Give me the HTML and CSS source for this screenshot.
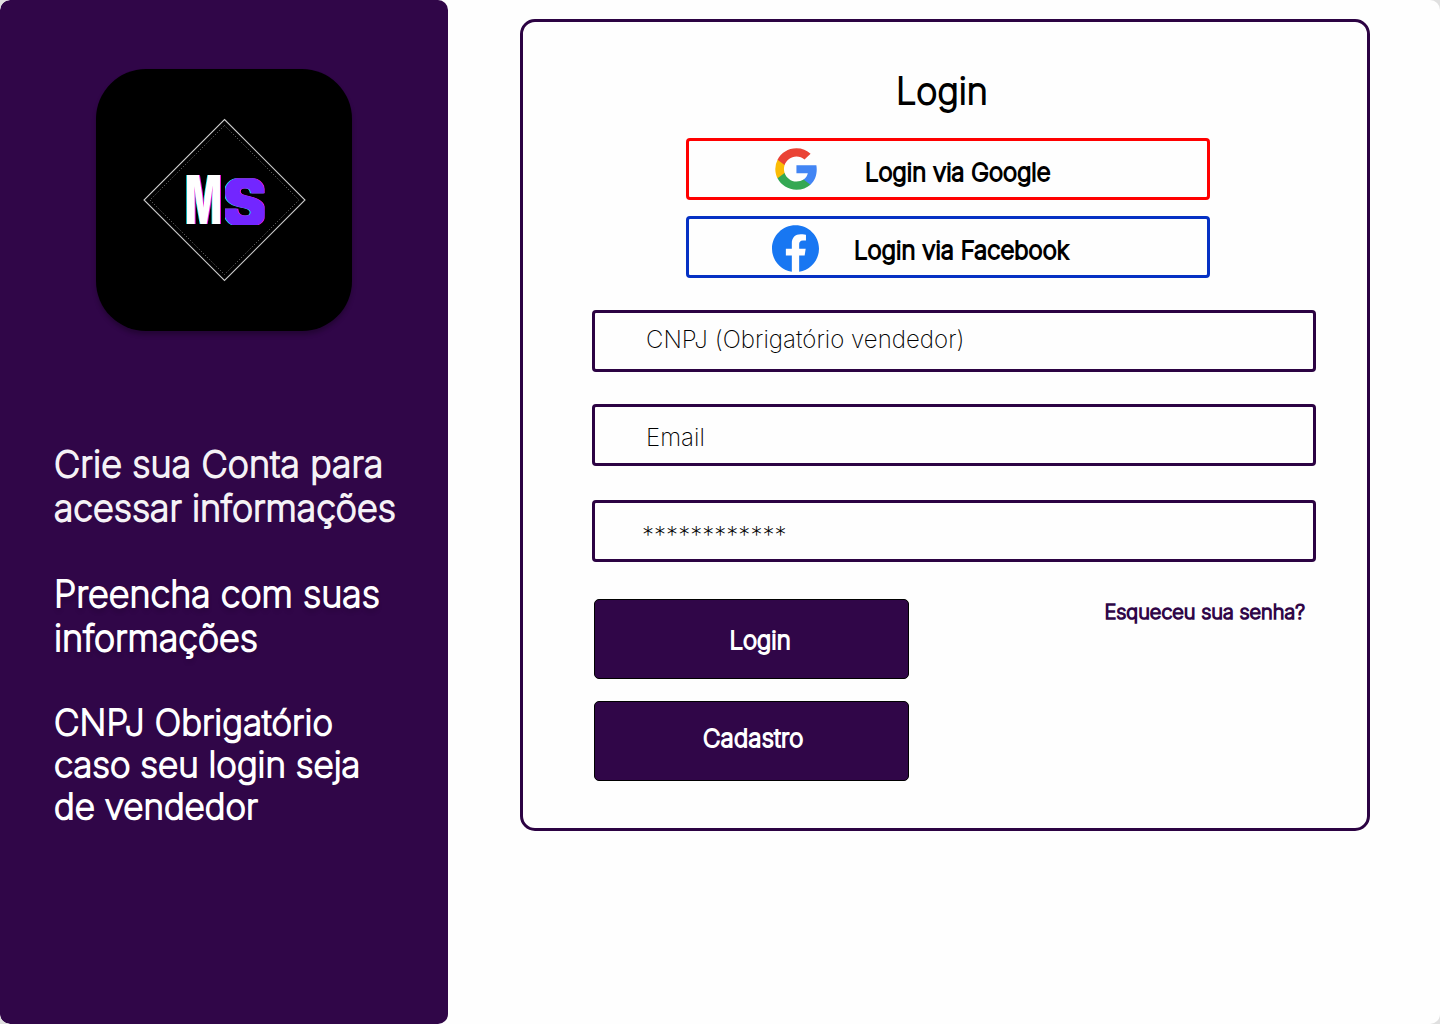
FILE: index.html
```html
<!DOCTYPE html>
<html lang="pt-BR">
<head>
<meta charset="utf-8">
<title>Login</title>
<link rel="stylesheet" href="styles.css">
</head>
<body>
<div class="page">
  <aside class="sidebar">
    <div class="logo">
      <svg class="logo-art" width="256" height="262" viewBox="0 0 256 262">
        <clipPath id="box"><rect x="129" y="109.500" width="39.500" height="46.500"/></clipPath>
        <path d="M128.500 50.500L209 131L128.500 211.500L48 131Z" fill="none" stroke="#c8c8c8" stroke-width="1.1"/>
        <path d="M128.500 56.500L203 131L128.500 205.500L54 131Z" fill="none" stroke="#777" stroke-width="1" stroke-dasharray="1 2"/>
        <g>
          <text class="m" transform="translate(88.400 155) scale(.57 1)" fill="#19e6f0">M</text>
          <text class="m" transform="translate(90.200 155) scale(.57 1)" fill="#f01bd8">M</text>
          <text class="m" transform="translate(89.300 155) scale(.57 1)" fill="#fff">M</text>
        </g>
        <g clip-path="url(#box)">
          <text class="s" transform="translate(125.500 157)" fill="#19e6f0" stroke="#19e6f0">S</text>
          <text class="s" transform="translate(127.500 157)" fill="#f01bd8" stroke="#f01bd8">S</text>
          <text class="s" transform="translate(126.500 157)" fill="#7226ff" stroke="#7226ff">S</text>
        </g>
      </svg>
    </div>
    <p class="note note-soft"><span class="loose">Crie sua Conta para</span><br>acessar informações</p>
    <p class="note note-shadow">Preencha com suas<br>informações</p>
    <p class="note note-small"><span class="loose">CNPJ Obrigatório</span><br>caso seu login seja<br>de vendedor</p>
  </aside>
  <main class="content">
    <form class="card">
      <h1 class="title">Login</h1>
      <div class="social google">
        <svg class="g-icon" width="42" height="42" viewBox="1.700 1.700 43.700 44.600" preserveAspectRatio="none">
          <path fill="#4285F4" d="M45.120 24.500c0-1.560-.14-3.060-.4-4.500H24v8.510h11.840c-.51 2.750-2.060 5.080-4.390 6.640v5.520h7.110c4.160-3.830 6.560-9.470 6.560-16.170z"/>
          <path fill="#34A853" d="M24 46c5.940 0 10.920-1.970 14.560-5.330l-7.110-5.520c-1.970 1.320-4.490 2.100-7.450 2.100-5.730 0-10.580-3.870-12.310-9.070H4.340v5.700C7.960 41.070 15.400 46 24 46z"/>
          <path fill="#FBBC05" d="M11.690 28.180C11.250 26.860 11 25.450 11 24s.25-2.860.69-4.180v-5.700H4.340A21.990 21.990 0 0 0 2 24c0 3.550.85 6.910 2.340 9.880l7.350-5.700z"/>
          <path fill="#EA4335" d="M24 10.750c3.230 0 6.130 1.110 8.410 3.290l6.310-6.310C34.910 4.180 29.930 2 24 2 15.400 2 7.960 6.930 4.340 14.120l7.350 5.700c1.730-5.200 6.580-9.070 12.310-9.070z"/>
        </svg>
        <span class="label">Login via Google</span>
      </div>
      <div class="social facebook">
        <svg class="f-icon" width="47" height="47" viewBox="0 0 24 24">
          <path fill="#1877F2" d="M24 12.073C24 5.446 18.627.073 12 .073S0 5.446 0 12.073c0 5.990 4.388 10.954 10.125 11.854v-8.385H7.078v-3.470h3.047V9.430c0-3.007 1.792-4.669 4.533-4.669 1.312 0 2.686.235 2.686.235v2.953H15.830c-1.491 0-1.956.925-1.956 1.874v2.250h3.328l-.532 3.470h-2.796v8.385C19.612 23.027 24 18.062 24 12.073z"/>
        </svg>
        <span class="label">Login via Facebook</span>
      </div>
      <div class="field cnpj"><span class="hint">CNPJ (Obrigatório vendedor)</span></div>
      <div class="field email"><span class="hint">Email</span></div>
      <div class="field password"><span class="hint">************</span></div>
      <div class="actions">
        <div class="buttons">
          <div class="btn enter"><span class="label">Login</span></div>
          <div class="btn signup"><span class="label">Cadastro</span></div>
        </div>
        <a class="forgot">Esqueceu sua senha?</a>
      </div>
    </form>
  </main>
</div>
</body>
</html>
```
FILE: styles.css
```css
* { box-sizing: border-box; }
body {
  margin: 0;
  background: #e0e0e0;
  font-family: Inter, "Liberation Sans", sans-serif;
  font-weight: 200;
}
.page {
  display: flex;
  width: 1440px;
  height: 1024px;
  background: #fefefe;
  border-radius: 10px;
  overflow: hidden;
}
.sidebar {
  width: 448px;
  height: 1024px;
  padding: 69px 0 0 54px;
  background: #300648;
  border-radius: 10px;
}
.logo {
  width: 256px;
  height: 262px;
  margin: 0 0 111px 42px;
  background: #000;
  border-radius: 50px;
  box-shadow: 0 4px 4px rgba(0, 0, 0, .25);
}
.logo-art { display: block; }
.m { font: 900 67px Inter, sans-serif; }
.s { font: 900 66px Inter, sans-serif; stroke-width: 1.2px; stroke-linejoin: miter; }
.note {
  margin: 0;
  color: #fff;
  font-size: 36px;
  line-height: 44px;
  white-space: nowrap;
  -webkit-text-stroke: 1.8px currentColor;
}
.note-soft { color: #f5f2f6; }
.loose { letter-spacing: .14px; }
.note-shadow {
  margin-top: 42px;
  text-shadow: 0 4px 4px rgba(0, 0, 0, .25);
}
.note-small {
  margin-top: 41px;
  font-size: 35px;
  line-height: 42px;
}
.content { padding: 19px 0 0 72px; }
.card {
  width: 850px;
  height: 812px;
  padding-top: 47px;
  border: 3px solid #2c0343;
  border-radius: 15px;
}
.title {
  margin: 0 0 25px 373px;
  font-size: 36px;
  font-weight: 200;
  line-height: 44px;
  -webkit-text-stroke: 1.8px #000;
}
.label {
  font-size: 24px;
  line-height: 29px;
  white-space: nowrap;
  -webkit-text-stroke: 1.8px currentColor;
}
.social {
  display: flex;
  align-items: flex-start;
  width: 524px;
  height: 62px;
  margin: 0 0 16px 163px;
  border: 3px solid #f00;
  border-radius: 4px;
}
.google { padding: 7px 0 0 86px; }
.google .label { margin: 10px 0 0 48px; }
.facebook {
  padding: 6px 0 0 83px;
  margin-bottom: 32px;
  border-color: #0531c4;
}
.facebook .label { margin: 11px 0 0 35px; letter-spacing: .05px; }
.field {
  width: 724px;
  height: 62px;
  margin: 0 0 32px 69px;
  padding: 12px 0 0 51px;
  border: 3px solid #2c0343;
  border-radius: 4px;
}
.hint {
  display: block;
  font-size: 24px;
  font-weight: 200;
  line-height: 29px;
  letter-spacing: .03px;
}
.email { padding-top: 16px; margin-bottom: 34px; }
.password { padding: 18px 0 0 47px; margin-bottom: 37px; }
.actions {
  display: flex;
  align-items: flex-start;
  justify-content: space-between;
  padding: 0 62px 0 71px;
}
.buttons { display: grid; gap: 22px; }
.btn {
  width: 315px;
  height: 80px;
  color: #fff;
  background: #300648;
  border: 1px solid #000;
  border-radius: 5px;
}
.btn .label { display: block; }
.enter { padding: 26px 0 0 135px; margin-left: -.5px; }
.signup { padding: 22px 0 0 108px; }
.signup .label { letter-spacing: .35px; }
.forgot {
  margin-top: 1px;
  color: #300648;
  font-size: 20px;
  line-height: 24px;
  -webkit-text-stroke: 1.6px currentColor;
}
```
